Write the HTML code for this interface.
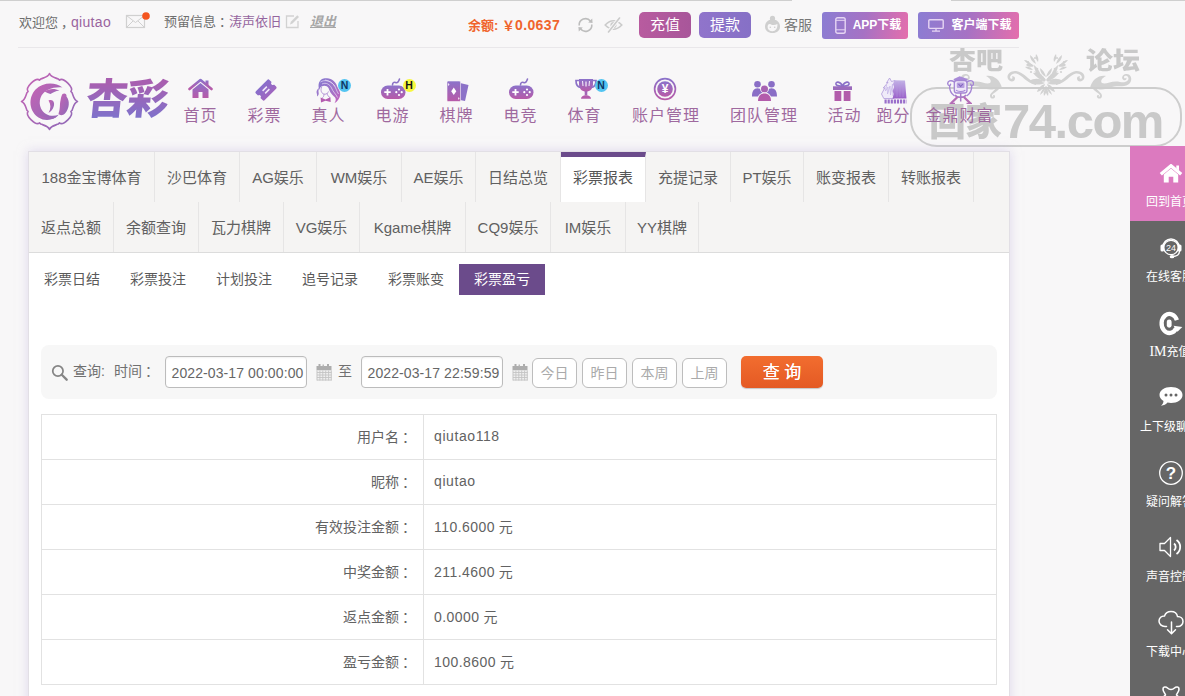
<!DOCTYPE html>
<html lang="zh-CN">
<head>
<meta charset="utf-8">
<title>彩票盈亏</title>
<style>
*{box-sizing:border-box;margin:0;padding:0}
html,body{width:1185px;height:696px;overflow:hidden}
body{background:#f8f7f8;font-family:"Liberation Sans","Noto Sans CJK SC",sans-serif;color:#555;position:relative;font-size:14px}
.abs{position:absolute;white-space:nowrap}
svg{display:block}
/* top bar */
.top{position:absolute;left:0;top:0;width:1185px;height:47px}
.top .t{position:absolute;top:0;height:44px;line-height:44px;font-size:13px;color:#6e6e6e;white-space:nowrap}
.hline{position:absolute;left:18px;top:47px;width:1001px;height:1px;background:#e9e7ea}
.btn{position:absolute;top:12px;height:27px;line-height:26px;border-radius:4px;color:#fff;font-size:15px;text-align:center;white-space:nowrap}
/* nav */
.nav a{position:absolute;top:104px;height:24px;line-height:24px;font-size:16px;letter-spacing:1px;color:#9f699f;white-space:nowrap;transform:translateX(-50%);text-decoration:none}
.nav .ic{position:absolute;top:76px}
.badge{position:absolute;width:13px;height:13px;border-radius:50%;font-size:10.500px;line-height:13px;text-align:center;color:#0d3563;font-weight:bold}
/* panel */
.panel{position:absolute;left:28px;top:151px;width:982px;height:560px;background:#fff;border:1px solid #e2dfe5;box-shadow:0 0 10px rgba(200,190,225,.55)}
.tabs{position:absolute;left:0;top:0;width:980px;height:101px;background:#f5f4f3;border-bottom:1px solid #dcdcdc}
.tabs .row{position:absolute;left:0;height:50px;display:flex}
.tabs .row span{display:block;height:50px;line-height:52px;padding:0;text-align:center;font-size:15px;color:#606060;border-right:1px solid #e6e5e5;white-space:nowrap}
.tabs .row span.on{background:#fff;border-top:5px solid #6b4b8b;line-height:42px;margin-top:0;height:50px;color:#555}
.sub{position:absolute;left:0;top:111.500px;display:flex}
.sub span{display:block;width:86px;height:31px;line-height:31px;text-align:center;font-size:14px;color:#5a5a5a}
.sub span.on{background:#6b4b8b;color:#fff}
.search{position:absolute;left:12px;top:193px;width:956px;height:54px;background:#f7f7f7;border-radius:8px}
.search .l{position:absolute;top:0;height:54px;line-height:53px;font-size:14px;color:#707070;white-space:nowrap}
.inp{position:absolute;top:11px;width:142px;height:32px;line-height:32px;border:1px solid #bcbcbc;border-radius:4px;background:#fff;font-size:14px;color:#666;padding-left:5.500px;letter-spacing:.1px;white-space:nowrap;box-shadow:inset 0 1px 2px rgba(0,0,0,.06)}
.qb{position:absolute;top:13px;width:45px;height:30px;line-height:28px;border:1px solid #bdbdbd;border-radius:6px;background:#fff;color:#aaa;font-size:14px;text-align:center}
.go{position:absolute;left:700px;top:11px;width:82px;height:32px;line-height:31px;border-radius:5px;background:linear-gradient(#f26d2f,#e45a24);color:#fff;font-size:17px;text-align:center;box-shadow:0 1px 1px rgba(0,0,0,.2);text-shadow:0 0 .6px #fff;padding-top:1px}
table{position:absolute;left:12px;top:262px;width:956px;border-collapse:collapse}
td{height:45px;border:1px solid #e2e2e2;font-size:14px;color:#626262;vertical-align:middle;padding-bottom:2px}
td.k{width:382px;text-align:right;padding-right:10px}
.la{letter-spacing:.6px}
.lb{letter-spacing:.45px}
.c{position:relative;left:3px}
td.v{padding-left:10px}
/* side */
.side{position:absolute;left:1130px;top:146px;width:80px}
.side div{position:relative;height:75px;background:#666;color:#fff;font-size:12px;text-align:center;white-space:nowrap}
.side div.h{background:#dc7abf}
.side div b{position:absolute;left:0;top:48px;width:80px;font-weight:normal;line-height:16px;text-align:center}
.side div svg{position:absolute}
/* watermark */
.wm{color:#c9c9c9;font-weight:bold;position:absolute;white-space:nowrap}
</style>
</head>
<body>
<svg width="0" height="0" style="position:absolute"><defs>
<linearGradient id="g" x1="0" y1="0" x2="0" y2="1"><stop offset="0" stop-color="#8b72ca"/><stop offset="1" stop-color="#b85aa8"/></linearGradient>
<linearGradient id="g2" x1="0" y1="0" x2="1" y2="1"><stop offset="0" stop-color="#c763b4"/><stop offset="1" stop-color="#8c6ab8"/></linearGradient>
</defs></svg>
<div class="abs" style="left:0;top:0;width:792px;height:1px;background:#cfcfcf"></div>
<div class="abs" style="left:951px;top:0;width:234px;height:1px;background:#cfcfcf"></div>
<div class="top">
  <span class="t" style="left:19px">欢迎您<span class="c">，</span><span style="color:#9a649f;font-size:14px;letter-spacing:.3px">qiutao</span></span>
  <svg class="abs" style="left:125px;top:11px" width="27" height="19" viewBox="0 0 27 19"><rect x="1.5" y="4.5" width="18" height="12" fill="none" stroke="#d0d0d0" stroke-width="1.2"/><path d="M1.5 4.5 L10.5 11.5 L19.5 4.5 M1.5 16.5 L8 10 M19.5 16.5 L13 10" fill="none" stroke="#d0d0d0" stroke-width="1"/><circle cx="21" cy="5" r="3.8" fill="#f4551f"/></svg>
  <span class="t" style="left:164px">预留信息<span class="c">：</span><span style="color:#95659f">涛声依旧</span></span>
  <svg class="abs" style="left:285px;top:14px" width="15" height="15" viewBox="0 0 15 15"><path d="M9 2 H1.5 V13.5 H13 V7" fill="none" stroke="#d2d2d2" stroke-width="1.3"/><path d="M5 10.5 L5.8 7.8 L12.3 1.3 L14 3 L7.5 9.5 Z" fill="#d2d2d2"/></svg>
  <span class="t" style="left:310px;color:#a6a6a6;font-weight:bold;font-style:italic;text-decoration:underline">退出</span>
  <span class="t" style="left:468px;top:3px;color:#f0642d;font-weight:bold">余额: ￥<span style="font-size:14px;letter-spacing:.4px">0.0637</span></span>
  <svg class="abs" style="left:576px;top:16px" width="19" height="18" viewBox="0 0 19 18"><path d="M3.2 9.5 A6.3 6.3 0 0 1 14.5 5.2" fill="none" stroke="#bdbdbd" stroke-width="1.6"/><path d="M15.8 8.5 A6.3 6.3 0 0 1 4.5 12.8" fill="none" stroke="#bdbdbd" stroke-width="1.6"/><path d="M12.2 6.6 L16.6 7 L16.2 2.6 Z M6.8 11.4 L2.4 11 L2.8 15.4 Z" fill="#bdbdbd"/></svg>
  <svg class="abs" style="left:604px;top:17px" width="19" height="16" viewBox="0 0 19 16"><path d="M1.200 8 Q9.500 -.5 17.800 8 Q9.500 16.500 1.200 8 Z" fill="none" stroke="#cbcbcb" stroke-width="1.600"/><circle cx="9.500" cy="8" r="3.100" fill="#cbcbcb"/><path d="M15.800 .8 L4.200 15.200" stroke="#f8f7f8" stroke-width="3.600"/><path d="M15.500 1 L4.500 15" stroke="#cbcbcb" stroke-width="1.600" stroke-linecap="round"/></svg>
  <div class="btn" style="left:639px;width:52px;height:26px;line-height:25px;background:linear-gradient(90deg,#b85b9f,#a8569a);border-radius:5px">充值</div>
  <div class="btn" style="left:699px;width:52px;height:26px;line-height:25px;background:linear-gradient(90deg,#9074cb,#8670c6);border-radius:5px">提款</div>
  <svg class="abs" style="left:764px;top:15px" width="17" height="19" viewBox="0 0 17 19"><circle cx="8.500" cy="3.400" r="2.600" fill="#cfcfcf"/><path d="M8.500 4.500 C3.500 4.500 1 8 1 11.500 C1 15.500 4 18 8.500 18 C13 18 16 15.500 16 11.500 C16 8 13.500 4.500 8.500 4.500 Z" fill="#cfcfcf"/><path d="M3.600 12 C3.600 9.500 5 8.500 7 9.500 C9 10.500 11.500 10 13.400 9 C13.800 13.500 11.500 16.200 8.500 16.200 C5.500 16.200 3.600 14.500 3.600 12 Z" fill="#f8f7f8"/><circle cx="6.300" cy="12.300" r=".8" fill="#cfcfcf"/><circle cx="10.700" cy="12.300" r=".8" fill="#cfcfcf"/></svg>
  <span class="t" style="left:784px;top:3px;font-size:14px;color:#777">客服</span>
  <div class="btn" style="left:822px;width:86px;font-size:12px;font-weight:bold;padding-left:24px;background:linear-gradient(100deg,#8b7dd3,#a672c4 50%,#e56eac);border-radius:3px">APP下载</div>
  <svg class="abs" style="left:835px;top:17px" width="11" height="17" viewBox="0 0 11 17"><rect x=".8" y=".8" width="9.400" height="15.400" rx="1.800" fill="none" stroke="#e6d5f3" stroke-width="1.400"/><path d="M1 3.300 H10 M1 12.800 H10" stroke="#e6d5f3" stroke-width="1"/></svg>
  <div class="btn" style="left:918px;width:101px;font-size:12px;font-weight:bold;padding-left:26px;background:linear-gradient(100deg,#8b7dd3,#a672c4 50%,#e56eac);border-radius:3px">客户端下载</div>
  <svg class="abs" style="left:928px;top:19px" width="16" height="13" viewBox="0 0 16 13"><rect x=".8" y=".8" width="14.400" height="8.600" rx="1" fill="none" stroke="#e6d5f3" stroke-width="1.400"/><path d="M8 9.500 V12 M4 12.200 H12" stroke="#e6d5f3" stroke-width="1.300"/></svg>
</div>
<div class="hline"></div>

<div class="wmk">
<div class="wm" style="left:949px;top:43px;font-size:27px;line-height:36px;font-weight:900;transform:scaleY(.9)">杏吧</div>
<div class="wm" style="left:1086px;top:43px;font-size:27px;line-height:36px;font-weight:900;transform:scaleY(.9)">论坛</div>
<svg class="abs" style="left:956px;top:50px" width="180" height="56" viewBox="-90 -30 180 56">
  <g id="fl" fill="#d2d2d2" stroke="none">
    <path d="M1 -1 C4 -6 9 -8 13 -7 C10 -3 6 0 1 1 Z"/>
    <path d="M2 1 C7 -2 12 -2 17 1 C12 3.500 7 3.500 2 1 Z"/>
    <path d="M1 4 C5 5 8 8 9 12 C5 11 2 8 1 4 Z"/>
    <path d="M0 -3 C1 -7 3 -10 6 -12 C6 -8 4 -5 0 -3 Z"/>
    <path d="M0 8 C2 10 3 13 2 16 C0 14 -1 11 0 8 Z"/>
    <circle cx="9" cy="-11" r="1.300"/><circle cx="15" cy="-8" r="1.100"/><circle cx="6" cy="9" r="1.200"/><circle cx="18" cy="-18" r="1.100"/><circle cx="11" cy="-22" r="1"/>
    <path d="M12 -14 C15 -17 18 -17 20 -15 C18 -13 15 -12.500 12 -14 Z"/>
        <path d="M0 0 C3 -4 6 -7 12 -9 C8 -4 5 -1 2 2 Z"/>
    <path d="M1 3 C6 1 10 1 15 3 C10 5 6 5 1 3 Z"/>
    <path d="M0 6 C3 8 5 11 6 15 C2 12 0 9 0 6 Z"/>
    <path d="M4 -2 C6 -8 8 -12 12 -15 C12 -10 9 -5 4 -2 Z"/>
    <path d="M10 -16 C11 -20 13 -23 16 -25 C16 -21 14 -18 10 -16 Z"/>
    <path d="M14 -15 C16 -18 19 -20 22 -20 C20 -17 17 -15 14 -15 Z"/>
    <path d="M8 -18 C7 -21 8 -24 10 -26 C11 -23 10 -20 8 -18 Z"/>
    <path d="M13 -10 C15 -13 18 -14 21 -13 C19 -11 16 -10 13 -10 Z"/>
    <path d="M10 3 C18 0 22 -8 30 -9 C36 -9.500 40 -5 38 -1 C36 2.500 31 2 31 -1.500 C31 -3 32.500 -4 34 -3.500 C33 -2 34 -.500 35.500 -1.500 C37 -3 34.500 -7 30 -6.500 C24 -5.500 20 3 10 5 Z"/>
    <path d="M44 8 C46 0 52 -5 60 -4 C56 -2 54 1 56 3 C60 5 66 0 74 2 C80 3.500 84 0 82 -3 C81 -5 77.500 -4.500 78 -2.500 C78.500 -1 80 -1.500 80 -2.500 C81.500 -1 79.500 1 77.500 0 C75 -1.500 76 -5.500 80 -6 C84.500 -6.500 87 -1 84 3 C80 8 72 5 66 7 C60 9 54 11 50 8 C53 12 56 13 56 16 C56 19 52 19.500 51 17 C50.500 15.500 52 14.500 53 15.500 C52 16.500 53.500 17.500 54 16 C54.500 14 50 12.500 47 9 Z"/>
  </g>
  <use href="#fl" transform="scale(-1,1)"/>
</svg>
<div class="abs" style="left:910px;top:87px;width:272px;height:60px;border:2px solid #cdcdcd;border-radius:27px"></div>
<div class="wm" style="left:929px;top:91px;height:56px;line-height:56px"><span style="font-size:38px;font-weight:900;letter-spacing:-1px;display:inline-block;transform:scaleX(.97);transform-origin:0 50%;vertical-align:1px">回家</span><span style="font-size:49px;letter-spacing:-1.500px;margin-left:0;position:relative;top:1.500px">74.com</span></div>
</div>
<div class="nav">
  <!-- logo emblem -->
  <svg class="abs" style="left:19.200px;top:71.300px" width="61" height="61" viewBox="-30.500 -30.500 61 61">
    <path id="lotus" d="M0.0 -28.0 C1.3 -24.5 4.3 -24.2 8.7 -22.6 L10.0 -21.4 C13.7 -24.7 24.7 -13.7 21.4 -10.0 L22.6 -8.7 C24.2 -4.3 24.5 -1.3 28.0 -0.0 C24.5 1.3 24.2 4.3 22.6 8.7 L21.4 10.0 C24.7 13.7 13.7 24.7 10.0 21.4 L8.7 22.6 C4.3 24.2 1.3 24.5 0.0 28.0 C-1.3 24.5 -4.3 24.2 -8.7 22.6 L-10.0 21.4 C-13.7 24.7 -24.7 13.7 -21.4 10.0 L-22.6 8.7 C-24.2 4.3 -24.5 1.3 -28.0 0.0 C-24.5 -1.3 -24.2 -4.3 -22.6 -8.7 L-21.4 -10.0 C-24.7 -13.7 -13.7 -24.7 -10.0 -21.4 L-8.7 -22.6 C-4.3 -24.2 -1.3 -24.5 -0.0 -28.0 Z" fill="none" stroke="url(#g2)" stroke-width="1.600" stroke-linejoin="round"/>
    <path d="M13 -14 C6 -19.500 -6 -20 -14 -12 C-22 -3 -20 10 -11 16 C-4 20.500 5 18.500 9.500 13 C3 16 -5 14 -8.500 7 C-11.500 0 -9 -8 -2 -11.500 C3 -14 9 -14.500 13 -14 Z" fill="url(#g2)"/>
    <path d="M-5 -10 C-1 -13 5 -13.500 10 -11 C6 -10.500 3 -9 1 -7.500 C-1 -8 -3 -9 -5 -10 Z" fill="url(#g2)"/>
    <path d="M-1 -1 C2 -2 4 -1 4.500 1.500 C5 5 3 9 -1 11.500 C1.500 7 1.500 3 -1 -1 Z" fill="url(#g2)"/>
    <path d="M13 -7.500 C15 -9 17.500 -7.500 17 -5 C20.500 -1 20 7 15.500 12 C13 14.500 10 14 9 12 C11 7 10 3 11 -1 C11.500 -4 12 -6 13 -7.500 Z" fill="url(#g2)"/>
    <path d="M-11 14 C-6 16.500 2 17 8 14.500 C4 19 -7 19 -11 14 Z" fill="url(#g2)"/>
  </svg>
  <div class="abs" style="left:86px;top:72px;font-size:42px;line-height:56px;font-weight:900;letter-spacing:-1px;background:linear-gradient(#a85fb0 20%,#7d73cc 85%);-webkit-background-clip:text;background-clip:text;color:transparent;-webkit-text-fill-color:transparent;transform:skewX(-6deg)">杏彩</div>

  <!-- home -->
  <svg class="abs" style="left:188px;top:78px" width="25" height="21" viewBox="0 0 25 21"><path d="M1.500 11 L12.500 2 L23.500 11" fill="none" stroke="url(#g)" stroke-width="2.600" stroke-linecap="round" stroke-linejoin="round"/><path d="M17.500 2.500 H20.500 V8 L17.500 5.500 Z" fill="url(#g)"/><path d="M4.500 11.500 L12.500 5 L20.500 11.500 V20 H14.500 V14 H10.500 V20 H4.500 Z" fill="url(#g)"/></svg>
  <!-- ticket -->
  <svg class="abs" style="left:252.800px;top:76.500px" width="26" height="26" viewBox="-13 -13 26 26"><defs><linearGradient id="gt" gradientUnits="userSpaceOnUse" x1="0" y1="-11" x2="0" y2="11"><stop offset="0" stop-color="#7f72d0"/><stop offset="1" stop-color="#a862bb"/></linearGradient></defs><path transform="rotate(-45)" d="M-8 -6.300 H8 A1.600 1.600 0 0 1 9.600 -4.700 V-1.700 A1.700 1.700 0 0 0 9.600 1.700 V4.700 A1.600 1.600 0 0 1 8 6.300 H-8 A1.600 1.600 0 0 1 -9.600 4.700 V1.700 A1.700 1.700 0 0 0 -9.600 -1.700 V-4.700 A1.600 1.600 0 0 1 -8 -6.300 Z" fill="url(#gt)"/><path transform="rotate(-45)" d="M-3 -1.800 H3 M-3 1.800 H3" stroke="#f1e8fa" stroke-width="1.500"/></svg>
  <!-- lady -->
  <svg class="abs" style="left:314px;top:77px" width="28" height="28" viewBox="0 0 28 28"><defs><linearGradient id="gl" x1="0" y1="0" x2="1" y2="1"><stop offset="0" stop-color="#8578d0"/><stop offset=".55" stop-color="#a074c8"/><stop offset="1" stop-color="#c65fbd"/></linearGradient></defs>
    <path d="M4.900 6 C6 2 10 .8 13 1.200 C18 1.500 22 5 23 9 C24 12 26.500 14 26.200 17.500 C26 21 24 24 20.500 26.300 C22.500 23 22 21 20 19.500 C17 17 15.500 14 14.500 11 C13 8.500 10 8 7.500 9.500 C6 10.500 5.500 12 5.200 13 C4.500 10.500 4.300 8 4.900 6 Z" fill="url(#gl)"/>
    <path d="M5.200 11 C3 12 2 14.500 2.800 16.500 C3.200 17.800 3.200 18.500 3 19.500 C4.500 18.500 5 17 4.600 15.500 C4.300 14 4.600 12.500 5.200 11 Z" fill="#9a78cc"/>
    <path d="M6.500 5 C10 2.500 16 3.500 19.500 7.500 C22 10.500 22.500 14 24.500 17 M8 7 C12 5 16 7.500 17.500 11 C19 15 22 17 23.500 20.500 M11 3 C15 3.500 19 6 21 9.500" fill="none" stroke="#e9e0f7" stroke-width=".7"/>
    <path d="M7.500 10.200 C7 12 6.800 13.300 7.400 14.800 C8 16.300 9.300 17.200 11 17.200 C12.500 17.200 13.700 16.300 14.300 14.800 M10 17.300 C10 19 9.500 20 8.500 20.800 M13.200 16.500 C13.500 18.500 14.500 19.800 15.800 20.500" fill="none" stroke="#b090d4" stroke-width=".9" stroke-linecap="round"/>
    <path d="M6.600 20.500 L11.500 22.500 L16.400 20.200 L16.700 25 L11.500 23.800 L7 25.500 Z" fill="#b45cb0"/>
  </svg>
  <div class="badge" style="left:338px;top:79px;background:#53c4f1">N</div>
  <!-- gamepad 1 -->
  <svg class="abs" style="left:380px;top:77px" width="27" height="23" viewBox="0 0 27 23"><path d="M12.500 8 C12.500 5.500 14 5 15.500 5.500 C17.500 6.200 18.500 5 19.500 2" fill="none" stroke="#8b72c6" stroke-width="1.600" stroke-linecap="round"/><rect x="1" y="8.500" width="24.500" height="13.500" rx="6.700" fill="url(#g)"/><path d="M7.500 12 V18.400 M4.300 15.200 H10.700" stroke="#fff" stroke-width="1.800"/><circle cx="19" cy="12.500" r="1.100" fill="#fff"/><circle cx="19" cy="18" r="1.100" fill="#fff"/><circle cx="16.300" cy="15.200" r="1.100" fill="#fff"/><circle cx="21.700" cy="15.200" r="1.100" fill="#fff"/></svg>
  <div class="badge" style="left:402.500px;top:79px;background:#f7f73e;color:#111">H</div>
  <!-- cards -->
  <svg class="abs" style="left:446px;top:80px" width="25" height="23" viewBox="0 0 25 23"><path d="M14 3 L22.500 5 L19 21 L14 20 Z" fill="#8c72c8"/><rect x="1" y="1" width="13.500" height="20.500" rx="1.200" fill="url(#g)" stroke="#f8f7f8" stroke-width=".6"/><path d="M7.750 7.500 L10.300 11.200 L7.750 15 L5.200 11.200 Z" fill="#fff"/><path d="M2.500 3 L3.500 4.500 L2.500 6 L1.800 4.500 Z M12.800 17 L13.600 18.500 L12.800 20 L12 18.500 Z" fill="#f3e6f6"/></svg>
  <!-- gamepad 2 -->
  <svg class="abs" style="left:508px;top:77px" width="27" height="23" viewBox="0 0 27 23"><path d="M12.500 8 C12.500 5.500 14 5 15.500 5.500 C17.500 6.200 18.500 5 19.500 2" fill="none" stroke="#8b72c6" stroke-width="1.600" stroke-linecap="round"/><rect x="1" y="8.500" width="24.500" height="13.500" rx="6.700" fill="url(#g)"/><path d="M7.500 12 V18.400 M4.300 15.200 H10.700" stroke="#fff" stroke-width="1.800"/><circle cx="19" cy="12.500" r="1.100" fill="#fff"/><circle cx="19" cy="18" r="1.100" fill="#fff"/><circle cx="16.300" cy="15.200" r="1.100" fill="#fff"/><circle cx="21.700" cy="15.200" r="1.100" fill="#fff"/></svg>
  <!-- trophy -->
  <svg class="abs" style="left:574px;top:78px" width="24" height="22" viewBox="0 0 24 22"><path d="M5 1 H19 V6 C19 11 16 13.500 12 13.500 C8 13.500 5 11 5 6 Z" fill="url(#g)"/><path d="M5 2.500 H2 C2 7 3.500 9 6.500 9.500 M19 2.500 H22 C22 7 20.500 9 17.500 9.500" fill="none" stroke="#8b72c8" stroke-width="1.700"/><path d="M10.700 13 H13.300 V17.500 H10.700 Z" fill="#a466b6"/><path d="M7 20.800 C7 18.500 9 17.300 12 17.300 C15 17.300 17 18.500 17 20.800 Z" fill="#b45cab"/><path d="M8.500 3 L9 8 M15.500 3 L15 8" stroke="#f0e6f8" stroke-width="1.100"/><path d="M12 3.500 V8.500" stroke="#f0e6f8" stroke-width="1.300"/></svg>
  <div class="badge" style="left:594.500px;top:79px;background:#53c4f1">N</div>
  <!-- yen -->
  <svg class="abs" style="left:653px;top:77px" width="24" height="24" viewBox="0 0 24 24"><circle cx="12" cy="12" r="10.400" fill="none" stroke="url(#g)" stroke-width="1.700"/><circle cx="12" cy="12" r="7.800" fill="url(#g)"/><text x="12" y="16.300" text-anchor="middle" font-family="Liberation Sans,sans-serif" font-size="12" font-weight="bold" fill="#fff">¥</text></svg>
  <!-- team -->
  <svg class="abs" style="left:751px;top:80px" width="27" height="22" viewBox="0 0 27 22"><circle cx="6.500" cy="4.300" r="3.300" fill="#8a6ec6"/><circle cx="20.500" cy="4.300" r="3.300" fill="#8a6ec6"/><path d="M1 16.500 C1 11 3 8.300 6.500 8.300 C10 8.300 12 11 12 16.500 Z M15 16.500 C15 11 17 8.300 20.500 8.300 C24 8.300 26 11 26 16.500 Z" fill="#8a6ec6"/><circle cx="13.500" cy="9" r="4.300" fill="#f8f7f8"/><circle cx="13.500" cy="9" r="3.500" fill="#a862b2"/><path d="M6.200 21.500 C6.200 15.500 9 12.600 13.500 12.600 C18 12.600 20.800 15.500 20.800 21.500 Z" fill="#f8f7f8"/><path d="M7 21 C7 16 9.500 13.400 13.500 13.400 C17.500 13.400 20 16 20 21 Z" fill="#b35cab"/></svg>
  <!-- gift -->
  <svg class="abs" style="left:832px;top:80px" width="21" height="22" viewBox="0 0 21 22"><path d="M10.500 6 C8 1 3.500 1.500 4 4 C4.500 6 8 6.200 10.500 6 C13 6.200 16.500 6 17 4 C17.500 1.500 13 1 10.500 6 Z" fill="none" stroke="#8a70c8" stroke-width="1.700"/><rect x="1" y="6.300" width="19" height="3.700" fill="#9a6abc"/><rect x="2.500" y="11" width="6.800" height="10" fill="#b25cab"/><rect x="11.700" y="11" width="6.800" height="10" fill="#b25cab"/></svg>
  <!-- bull -->
  <svg class="abs" style="left:880px;top:77px" width="28" height="28" viewBox="0 0 28 28"><defs><linearGradient id="gb" x1="0" y1="0" x2="0" y2="1"><stop offset="0" stop-color="#c3b3e6"/><stop offset="1" stop-color="#9a5fc9"/></linearGradient></defs>
    <path d="M9.600 1 L6.500 5.800 L8 5.400 L3.200 11 L4.800 10.800 L1.500 17 L3.800 21.500 H14 L15 3.500 L11.500 4.500 Z" fill="#f0ebf9" stroke="#b09adb" stroke-width=".8" stroke-linejoin="round"/>
    <path d="M6.500 8 L5.500 14 L8 10 L7.500 17 L10 9 L10.500 18 L12.500 7 L13 19" fill="none" stroke="#c7b8e8" stroke-width=".8"/>
    <path d="M14.500 3.300 L25 3.500 L26.500 21.500 H12.500 L13.800 17 L12.600 14 L14.200 10 L13 7 Z" fill="url(#gb)"/>
    <path d="M17 5 V20 M20 5 V20 M23 6 V20" stroke="#b49ee0" stroke-width=".7" opacity=".6"/>
    <path d="M4.500 24.500 H26.600" stroke="#9a6fcb" stroke-width="4" stroke-dasharray="2.200 .9"/>
  </svg>
  <!-- ding -->
  <svg class="abs" style="left:946px;top:76px" width="28" height="28" viewBox="0 0 28 28">
    <path d="M7.700 3 L13.700 .3 L21.600 3 V4.500 H7.700 Z" fill="#a98bd8"/>
    <rect x="8.300" y="4.500" width="12.700" height="12.500" rx="2.500" fill="#eee6f8" stroke="#a486d4" stroke-width="1.300"/>
    <rect x="10.800" y="6.500" width="7.700" height="5.500" rx="1" fill="#b79fe0"/>
    <path d="M12.500 8 L14.700 10.500 L16.800 8" fill="none" stroke="#7f62bd" stroke-width="1.100"/>
    <path d="M10 14.200 C12 16 17 16 19.300 14.200" fill="none" stroke="#a486d4" stroke-width="1.100"/>
    <path d="M8.300 6 C5 3.500 1.300 5 1.800 8 C2.100 10 4.500 10 4.600 8.300 M3.600 9.800 C3.500 14 5 17.500 8 19.500 M21 6 C24.300 3.500 28 5 27.500 8 C27.200 10 24.800 10 24.700 8.300 M25.700 9.800 C25.800 14 24.300 17.500 21.300 19.500" fill="none" stroke="#a486d4" stroke-width="1.400" stroke-linecap="round"/>
    <path d="M14.700 17 V25.500 M9 19 C11 22 18 22 20.300 19" fill="none" stroke="#a77cc8" stroke-width="1.500"/>
    <path d="M11.500 21 L5 27.300 M17.800 21 L24.400 27.300" stroke="#b56db6" stroke-width="2.300"/>
    <path d="M3.500 27.300 H9 M20.500 27.300 H26" stroke="#b56db6" stroke-width="1.300"/>
  </svg>

  <a style="left:200.500px">首页</a>
  <a style="left:264.500px">彩票</a>
  <a style="left:328.500px">真人</a>
  <a style="left:392.500px">电游</a>
  <a style="left:456.500px">棋牌</a>
  <a style="left:520.500px">电竞</a>
  <a style="left:584.500px">体育</a>
  <a style="left:666px">账户管理</a>
  <a style="left:764px">团队管理</a>
  <a style="left:844.500px">活动</a>
  <a style="left:893.500px">跑分</a>
  <a style="left:959.500px">金鼎财富</a>
</div>

<div class="panel">
  <div class="tabs">
    <div class="row" style="top:0"><span style="width:126px">188金宝博体育</span><span style="width:85px">沙巴体育</span><span style="width:77px">AG娱乐</span><span style="width:85px">WM娱乐</span><span style="width:74px">AE娱乐</span><span style="width:85px">日结总览</span><span class="on" style="width:85px">彩票报表</span><span style="width:85px">充提记录</span><span style="width:73px">PT娱乐</span><span style="width:85px">账变报表</span><span style="width:85px">转账报表</span></div>
    <div class="row" style="top:50px"><span style="width:85px">返点总额</span><span style="width:85px">余额查询</span><span style="width:85px">瓦力棋牌</span><span style="width:76px">VG娱乐</span><span style="width:106px">Kgame棋牌</span><span style="width:85px">CQ9娱乐</span><span style="width:75px">IM娱乐</span><span style="width:73px">YY棋牌</span></div>
  </div>
  <div class="sub"><span>彩票日结</span><span>彩票投注</span><span>计划投注</span><span>追号记录</span><span>彩票账变</span><span class="on">彩票盈亏</span></div>
  <div class="search">
    <svg class="abs" style="left:10px;top:18.500px" width="17.500" height="17.500" viewBox="0 0 19 19"><circle cx="7.500" cy="7.500" r="5.600" fill="none" stroke="#858585" stroke-width="1.900"/><path d="M11.700 11.700 L17 17" stroke="#858585" stroke-width="2.500" stroke-linecap="round"/></svg>
    <span class="l" style="left:32px">查询:</span>
    <span class="l" style="left:73px">时间<span class="c">：</span></span>
    <div class="inp" style="left:124px">2022-03-17 00:00:00</div>
    <svg class="abs" style="left:275px;top:19px" width="16" height="17" viewBox="0 0 16 17"><rect x=".5" y="2" width="15" height="4.500" fill="#adadad"/><rect x="2.500" y="0" width="2" height="3" fill="#adadad"/><rect x="6.500" y=".5" width="1.500" height="2" fill="#b8b8b8"/><rect x="11" y="0" width="2" height="3" fill="#adadad"/><rect x=".5" y="6.500" width="15" height="10" fill="#f0f0f0"/><path d="M1 8.500 H15.500 M1 11 H15.500 M1 13.500 H15.500 M1 16 H15.500 M1 6.500 V16.500 M3.900 6.500 V16.500 M6.800 6.500 V16.500 M9.700 6.500 V16.500 M12.600 6.500 V16.500 M15.300 6.500 V16.500" stroke="#c4c4c4" stroke-width=".9"/></svg>
    <span class="l" style="left:297px">至</span>
    <div class="inp" style="left:320px">2022-03-17 22:59:59</div>
    <svg class="abs" style="left:471px;top:19px" width="16" height="17" viewBox="0 0 16 17"><rect x=".5" y="2" width="15" height="4.500" fill="#adadad"/><rect x="2.500" y="0" width="2" height="3" fill="#adadad"/><rect x="6.500" y=".5" width="1.500" height="2" fill="#b8b8b8"/><rect x="11" y="0" width="2" height="3" fill="#adadad"/><rect x=".5" y="6.500" width="15" height="10" fill="#f0f0f0"/><path d="M1 8.500 H15.500 M1 11 H15.500 M1 13.500 H15.500 M1 16 H15.500 M1 6.500 V16.500 M3.900 6.500 V16.500 M6.800 6.500 V16.500 M9.700 6.500 V16.500 M12.600 6.500 V16.500 M15.300 6.500 V16.500" stroke="#c4c4c4" stroke-width=".9"/></svg>
    <div class="qb" style="left:491px">今日</div>
    <div class="qb" style="left:541px">昨日</div>
    <div class="qb" style="left:591px">本周</div>
    <div class="qb" style="left:641px">上周</div>
    <div class="go">查 询</div>
  </div>
  <table>
    <tr><td class="k">用户名<span class="c">：</span></td><td class="v"><span class="la">qiutao</span><span class="lb">118</span></td></tr>
    <tr><td class="k">昵称<span class="c">：</span></td><td class="v"><span class="la">qiutao</span></td></tr>
    <tr><td class="k">有效投注金额<span class="c">：</span></td><td class="v"><span class="lb">110.6000</span> 元</td></tr>
    <tr><td class="k">中奖金额<span class="c">：</span></td><td class="v"><span class="lb">211.4600</span> 元</td></tr>
    <tr><td class="k">返点金额<span class="c">：</span></td><td class="v"><span class="lb">0.0000</span> 元</td></tr>
    <tr><td class="k">盈亏金额<span class="c">：</span></td><td class="v"><span class="lb">100.8600</span> 元</td></tr>
  </table>
</div>

<div class="side">
  <div class="h"><svg width="24" height="19" viewBox="0 0 24 19" style="left:28.500px;top:17.500px"><path d="M1.800 10.300 L12 1.800 L22.200 10.300" fill="none" stroke="#fff" stroke-width="3.400" stroke-linejoin="miter"/><path d="M17.300 1.500 H20 V6.500 L17.300 4.300 Z" fill="#fff"/><path d="M4.800 10.500 L12 4.600 L19.200 10.500 V18.600 H14.300 V12.800 H9.700 V18.600 H4.800 Z" fill="#fff"/></svg><b>回到首页</b></div>
  <div><svg width="26" height="24" viewBox="0 0 26 24" style="left:28px;top:15px"><path d="M5 11 A8 8 0 0 1 21 11" fill="none" stroke="#fff" stroke-width="1.600"/><circle cx="13" cy="11.500" r="7.200" fill="none" stroke="#fff" stroke-width="1.300"/><rect x="2.500" y="8.500" width="3.600" height="7" rx="1.600" fill="#fff"/><rect x="19.900" y="8.500" width="3.600" height="7" rx="1.600" fill="#fff"/><path d="M21.500 15 C21.500 19 18 20.500 15 20.500" fill="none" stroke="#fff" stroke-width="1.400"/><ellipse cx="14" cy="20.700" rx="2.300" ry="1.600" fill="#fff"/><text x="13" y="15" text-anchor="middle" font-family="Liberation Sans,sans-serif" font-size="9" fill="#fff">24</text></svg><b>在线客服</b></div>
  <div><svg width="26" height="27" viewBox="0 0 26 27" style="left:28px;top:14px"><path d="M18.900 10.200 A7.900 9.500 0 1 0 18.300 18.300" fill="none" stroke="#fff" stroke-width="4.300"/><path d="M15.500 15.800 L24.300 17 L19.500 21.800 Z" fill="#fff"/><rect x="8.800" y="9.400" width="4.800" height="8.300" rx="2.400" fill="#fff"/></svg><b><span style="font-family:'Liberation Serif',serif;font-size:14px">IM</span>充值</b></div>
  <div><svg width="26" height="22" viewBox="0 0 26 22" style="left:28px;top:15px"><path d="M13 1 C19.500 1 24.500 4.500 24.500 9 C24.500 13.500 19.500 17 13 17 C11.800 17 10.600 16.900 9.500 16.600 C8 18.300 6 19.500 3 19.800 C4.500 18.500 5.300 17 5.500 15 C3 13.500 1.500 11.400 1.500 9 C1.500 4.500 6.500 1 13 1 Z" fill="#fff"/><circle cx="8" cy="9" r="1.500" fill="#666"/><circle cx="13" cy="9" r="1.500" fill="#666"/><circle cx="18" cy="9" r="1.500" fill="#666"/></svg><b>上下级聊天</b></div>
  <div><svg width="26" height="26" viewBox="0 0 26 26" style="left:28px;top:14px"><circle cx="13" cy="13" r="11.300" fill="none" stroke="#fff" stroke-width="1.300"/><text x="13" y="19" text-anchor="middle" font-family="Liberation Sans,sans-serif" font-size="17" font-weight="bold" fill="#fff">?</text></svg><b>疑问解答</b></div>
  <div><svg width="26" height="24" viewBox="0 0 26 24" style="left:28px;top:14px"><path d="M2 8.500 H6.500 L12.500 2.500 V21.500 L6.500 15.500 H2 Z" fill="none" stroke="#fff" stroke-width="1.300" stroke-linejoin="round"/><path d="M16 8.500 A4.500 4.500 0 0 1 16 15.500" fill="none" stroke="#fff" stroke-width="1.800"/><path d="M18.500 5 A8.500 8.500 0 0 1 18.500 19" fill="none" stroke="#fff" stroke-width="1.800"/></svg><b>声音控制</b></div>
  <div><svg width="28" height="26" viewBox="0 0 28 26" style="left:27px;top:14px"><path d="M9.500 16.500 H8 C4.500 16.500 2 14 2 11 C2 8 4.500 5.800 7.500 6 C8.500 3 11 1.500 14 1.500 C17.500 1.500 20 3.500 20.500 6.500 C23.500 6.500 26 8.500 26 11.500 C26 14.500 23.500 16.500 21 16.500 H19.500" fill="none" stroke="#fff" stroke-width="1.500" stroke-linecap="round"/><path d="M14.500 12 V23.500 M10.500 19.800 L14.500 23.800 L18.500 19.800" fill="none" stroke="#fff" stroke-width="1.500" stroke-linecap="round" stroke-linejoin="round"/></svg><b>下载中心</b></div>
  <div><svg width="28" height="26" viewBox="0 0 28 26" style="left:27px;top:14px"><path d="M6 4 C6 1.500 9 1.500 10.500 3 C12.500 5 15.500 5 17.500 3 C19 1.500 22 1.500 22 4 C22 7 20 8 19.500 10 C23 13 25 17 24 21 C23 24 19 25 14 25 C9 25 5 24 4 21 C3 17 5 13 8.500 10 C8 8 6 7 6 4 Z" fill="none" stroke="#fff" stroke-width="1.600" stroke-linejoin="round"/></svg><b>手机投注</b></div>
</div>

</body>
</html>
